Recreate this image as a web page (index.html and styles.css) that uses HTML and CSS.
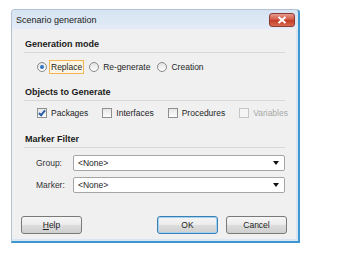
FILE: index.html
```html
<!DOCTYPE html>
<html>
<head>
    <title>Scenario generation</title>
    <link rel="stylesheet" href="styles.css">
</head>
<body>
    <div class="dialog">
        <div class="titlebar">
            <span class="title">Scenario generation</span>
            <span class="close">
                <svg width="10" height="8" viewBox="0 0 10 8">
                    <path d="M1.5 1 L8.5 7 M8.5 1 L1.5 7" stroke="#fff" stroke-width="2"/>
                </svg>
            </span>
        </div>

        <div class="content">
            <div class="group-title">Generation mode</div>
            <div class="options">
                <span class="option"><span class="radio on"></span><span class="label focus">Replace</span></span>
                <span class="option"><span class="radio"></span><span class="label">Re-generate</span></span>
                <span class="option"><span class="radio"></span><span class="label">Creation</span></span>
            </div>

            <div class="group-title">Objects to Generate</div>
            <div class="options checks">
                <span class="option"><span class="check on"></span><span class="label">Packages</span></span>
                <span class="option"><span class="check"></span><span class="label">Interfaces</span></span>
                <span class="option"><span class="check"></span><span class="label">Procedures</span></span>
                <span class="option disabled"><span class="check"></span><span class="label">Variables</span></span>
            </div>

            <div class="group-title">Marker Filter</div>
            <div class="filters">
                <span class="field-label">Group:</span>
                <div class="select"><span>&lt;None&gt;</span><span class="arrow"></span></div>
                <span class="field-label">Marker:</span>
                <div class="select"><span>&lt;None&gt;</span><span class="arrow"></span></div>
            </div>
        </div>

        <div class="buttons">
            <button class="btn"><u>H</u>elp</button>
            <span class="spacer"></span>
            <button class="btn default">OK</button>
            <button class="btn">Cancel</button>
        </div>
    </div>
</body>
</html>
```

FILE: styles.css
```css
body {
    margin: 0;
    background: #fff;
    font-family: "Liberation Sans", Arial, sans-serif;
    font-size: 8.5px;
    color: #1e1e1e;
}
.dialog {
    margin: 9px 0 0 11px;
    width: 286px;
    height: 231px;
    background: #f0f0f0;
    border-left: 1px solid #b4c3d4;
    border-top: 1px solid #b4c3d4;
    border-right: 2px solid #3f97cf;
    border-bottom: 2px solid #3f97cf;
    border-radius: 4px 4px 0 0;
    box-shadow: inset -2px -2px 0 #d7e6f2;
    display: flex;
    flex-direction: column;
}
.titlebar {
    height: 19px;
    background: linear-gradient(#d6e3f2, #e3ecf7);
    border-radius: 4px 4px 0 0;
    display: flex;
    align-items: center;
    padding: 0 3px 0 4px;
}
.title {
    flex: 1;
    font-size: 9px;
    color: #222;
    padding-top: 1px;
}
.close {
    width: 24px;
    height: 12px;
    margin-top: 1px;
    border: 1px solid #8c3a33;
    border-radius: 3px;
    background: linear-gradient(#e69b8e, #d1533f 50%, #c13a25 51%, #d96a4f);
    display: flex;
    align-items: center;
    justify-content: center;
}
.content {
    padding: 8px 13px 0 12px;
}
.group-title {
    font-weight: bold;
    font-size: 9px;
    height: 14px;
    line-height: 14px;
    padding: 0 0 1px 1px;
    border-bottom: 1px solid #d3d8dc;
    color: #1a1a1a;
}
.options {
    display: flex;
    align-items: center;
    height: 14px;
    margin: 7px 0 11px 13px;
}
.options.checks {
    margin: 5px 0 12px 13px;
}
.option {
    display: flex;
    align-items: center;
    margin-right: 5px;
}
.checks .option {
    margin-right: 12px;
}
.label {
    padding: 1px 1px;
    border: 1px solid transparent;
}
.label.focus {
    border-color: #f2b552;
    background: #fdf6e6;
}
.radio {
    width: 8px;
    height: 8px;
    border: 1px solid #8a8a8a;
    border-radius: 50%;
    background: linear-gradient(#e4e4e4, #fdfdfd);
    margin-right: 2px;
    position: relative;
}
.radio.on::after {
    content: "";
    position: absolute;
    left: 2px;
    top: 2px;
    width: 4px;
    height: 4px;
    border-radius: 50%;
    background: #2d74c4;
}
.check {
    width: 8px;
    height: 8px;
    border: 1px solid #8e8f8f;
    background: linear-gradient(#e6e6e6, #fdfdfd);
    margin-right: 2px;
    position: relative;
}
.check.on::after {
    content: "";
    position: absolute;
    left: 2px;
    top: 0px;
    width: 2px;
    height: 5px;
    border: solid #2b5ea8;
    border-width: 0 2px 2px 0;
    transform: rotate(40deg);
}
.disabled .check {
    border-color: #c5c5c5;
    background: #f4f4f4;
}
.disabled .label {
    color: #a8a8a8;
}
.filters {
    display: grid;
    grid-template-columns: 37px 1fr;
    row-gap: 6px;
    align-items: center;
    margin: 7px 0 0 12px;
}
.field-label {
    color: #333;
}
.select {
    height: 14px;
    border: 1px solid #a5a5a5;
    border-radius: 2px;
    background: #fff;
    display: flex;
    align-items: center;
    justify-content: space-between;
    padding: 0 5px 0 4px;
}
.arrow {
    width: 0;
    height: 0;
    border-left: 3px solid transparent;
    border-right: 3px solid transparent;
    border-top: 4px solid #111;
}
.buttons {
    display: flex;
    gap: 8px;
    margin-top: 23px;
    padding: 0 11px 0 9px;
}
.spacer {
    flex: 1;
}
.btn {
    width: 61px;
    height: 18px;
    border: 1px solid #7a7a7a;
    border-radius: 3px;
    background: linear-gradient(#f6f6f6, #ebebeb 50%, #dddddd 51%, #cfcfcf);
    font-family: "Liberation Sans", Arial, sans-serif;
    font-size: 8.5px;
    color: #222;
    padding: 0;
}
.btn.default {
    border-color: #3c7fb1;
    box-shadow: inset 0 0 0 1px #9fd3f3;
}
```
